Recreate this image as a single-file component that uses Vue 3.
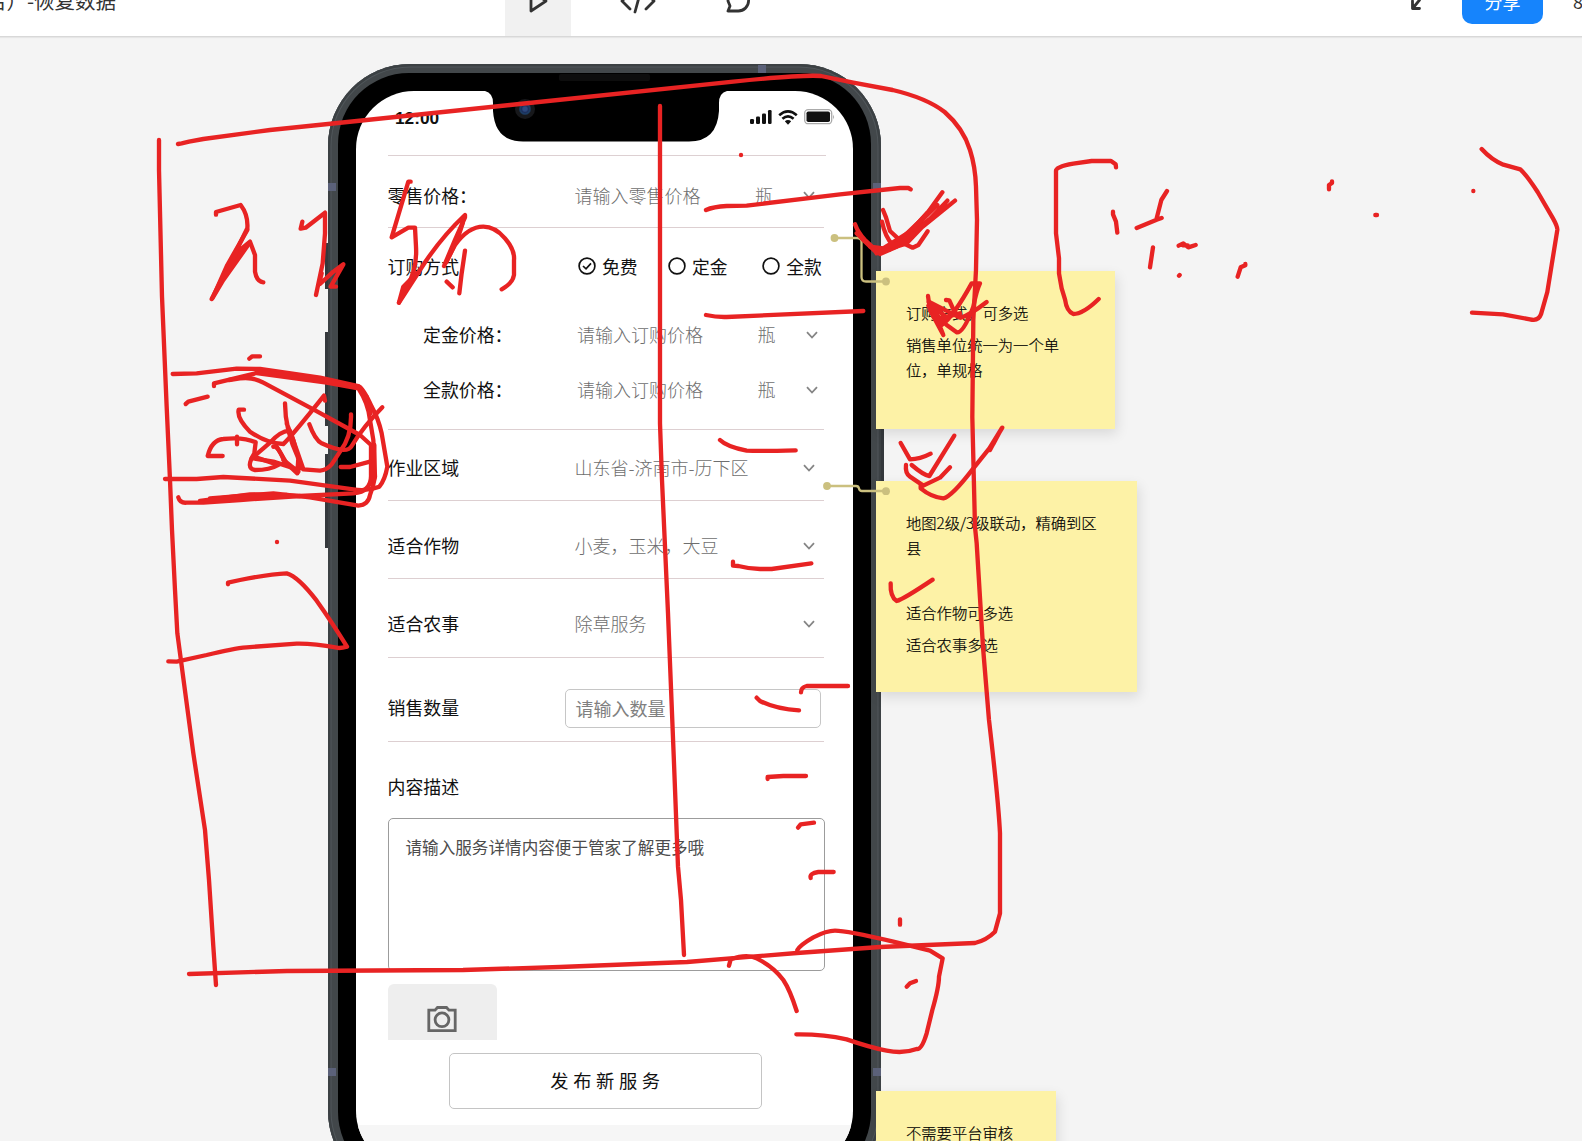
<script setup>
const notes = [
  { cls: 'note-order', lines: ['订购方式，可多选', '销售单位统一为一个单位，单规格'] },
  { cls: 'note-area', lines: ['地图2级/3级联动，精确到区县', '', '适合作物可多选', '适合农事多选'] },
  { cls: 'note-audit', lines: ['不需要平台审核'] },
]

const payOptions = [
  { label: '免费', checked: true },
  { label: '定金', checked: false },
  { label: '全款', checked: false },
]

const selects = [
  { label: '作业区域', value: '山东省-济南市-历下区', cls: 'row-area' },
  { label: '适合作物', value: '小麦，玉米，大豆', cls: 'row-crop' },
  { label: '适合农事', value: '除草服务', cls: 'row-work' },
]

// Hand-drawn annotation strokes, stored per tile at 3x resolution
const ink = [
  {
    x: 140,
    y: 130,
    d: [
      'M57 30V120L66 500L80 830L90 1050L96 1200L105 1380L112 1510L160 1870L195 2100L207 2250L220 2450L228 2565',
      'M228 254V246L302 225Q325 255 322 295L280 380L215 507L265 415L300 360L330 335L345 375V425Q350 455 370 457',
      'M222 495L262 405L322 300M217 505L250 450L328 340M240 460L290 365M250 450L275 390',
      'M487 275L482 296L497 293L555 248V310L548 400L528 495M540 462L580 425L610 403L572 470H588M540 450L545 430',
      'M812 155H805L755 322L805 293H825L828 350Q832 420 800 470L777 518L840 420Q900 325 975 255V262L945 330L912 408L945 345Q985 290 1030 290Q1065 290 1095 325Q1125 360 1122 390V435Q1118 460 1085 478',
      'M777 518L790 470L830 430M780 510L815 450M920 395L955 320L968 280M975 362L965 430L958 490M920 455L938 472',
      'M328 686L337 679H360',
      'M98 732L170 730L290 716L360 717L540 743L655 768Q670 775 695 830Q715 865 725 910L742 1010Q735 1050 718 1070Q680 1085 640 1078L450 1052L250 1041L170 1047H75',
      'M222 768V760L350 729L560 758L655 775Q685 820 690 870L700 930L705 1040Q700 1070 690 1095Q685 1125 655 1127L510 1102L400 1090L210 1105',
      'M350 722L560 752L660 772M680 800L692 850',
      'M267 750L300 745Q340 740 370 758L520 838L660 915L693 945V1035Q695 1085 640 1090L480 1098L330 1093L180 1113',
      'M115 1102Q120 1120 140 1118H190L300 1110L480 1098M200 1112L330 1100L440 1095M703 945V1045M699 950V1050',
      'M137 822L145 815L203 800',
      'M312 839H296Q290 865 330 905Q380 940 430 942Q450 925 552 797L555 812',
      'M435 820Q435 900 475 985L472 1030L440 1000L410 950M440 880L460 930L482 1015',
      'M248 978H203Q215 930 250 927Q310 920 347 937L343 970Q315 1015 345 1020Q390 1020 415 1005L350 983',
      'M335 985L390 938Q425 900 450 903L470 960L490 1018M340 985L400 995L472 1018M400 950Q415 945 435 1000M490 1018L540 1022Q560 1020 575 1003L600 965Q635 920 633 853M430 990L475 1025',
      'M508 883Q525 930 545 940Q620 975 635 948Q670 890 727 832',
      'M602 1011H630L690 995M291 920V943',
    ],
  },
  {
    x: 140,
    y: 480,
    d: [
      'M411 186h.1',
      'M264 313V308L300 300Q390 282 440 280Q475 290 530 362Q575 425 621 500Q600 506 590 503Q520 490 470 491L320 502Q280 505 200 525L110 545L85 544',
    ],
  },
  {
    x: 540,
    y: 130,
    d: ['M603 75h.1', 'M498 240Q520 230 560 228L620 227L900 193L1080 174H1105L1112 178', 'M498 555Q530 562 560 561L970 543', 'M540 930Q560 950 620 962Q660 964 767 961'],
  },
  {
    x: 860,
    y: 130,
    d: [
      'M-15 283Q-5 310 15 330L60 372L110 350Q140 330 180 280L247 187',
      'M-10 310L45 360L120 345L285 212M50 370L130 325L232 225M60 365L140 340L262 212M30 350L70 355L150 305L200 250',
      'M5 325L50 368L90 358M60 362L110 340L165 300M120 330L185 268L225 225M150 320L205 270',
      'M69 240L78 262L90 303L130 340L158 353L175 345L203 304M66 275Q75 320 98 345M80 350Q110 350 160 310',
      'M204 498L210 540L250 615L240 590L205 527L245 585Q280 560 335 460H360Q350 480 340 530Q310 610 290 607L260 585L210 540',
      'M258 510L268 511L283 545L302 563Q330 555 380 516M206 515L300 563M215 540L240 565L300 550M220 560L240 580L280 550M212 525L235 580M225 535L260 562',
      'M122 939L150 988Q180 988 212 971M283 917L208 1038Q190 1035 155 1005',
      'M138 1005Q135 1030 150 1040L190 1067L240 1043L270 1012M182 1065V1075Q215 1102 250 1105Q275 1100 340 1015L388 955L425 895L390 960M400 942L425 895M405 930L427 893',
      'M768 112L767 103L753 93H695L640 101Q588 110 588 122V310L597 385V430L605 475L615 508Q620 545 640 552Q670 552 716 507',
      'M759 245V253L768 275L772 308M921 183L904 210L890 265M830 294L890 269L905 264M879 352L870 412',
      'M956 347L970 340L985 352L1007 345M968 346h15M957 437l2-2M1133 440L1142 412L1156 406V402',
    ],
  },
  {
    x: 540,
    y: 480,
    d: [
      'M579 245V257L595 258Q625 266 660 267H695L814 250',
      'M650 653L660 663Q710 688 777 691M783 637Q783 622 800 618H924',
      'M683 897V891L730 888H798M774 1043L782 1033L822 1028M812 1194Q808 1180 835 1176H881',
      'M1052 310Q1050 350 1070 363Q1090 358 1178 299',
    ],
  },
  {
    x: 560,
    y: 800,
    d: [
      'M1020 358V374M1040 560L1050 550L1068 543',
      'M712 450Q720 435 760 412Q800 392 825 392Q860 392 1000 425L1110 452L1148 475L1137 530Q1137 560 1117 630L1100 700Q1085 750 1070 747Q1030 762 980 752Q930 742 860 718Q790 702 709 703',
      'M507 497L512 478Q560 460 590 475Q640 500 670 540Q690 570 710 633',
    ],
  },
  {
    x: 0,
    y: 0,
    d: [
      'M534 432L545 430L567 425L610 417L810 390L1071 363L1530 315L2200 245Q2400 224 2463 228L2560 248L2678 270Q2780 294 2834 336Q2890 385 2910 450Q2926 500 2928 560L2931 660L2928 810L2920 960L2917 1251L2925 1581L2930 1629L2949 1941L2967 2160Q2995 2400 3000 2499V2740L2985 2795Q2960 2820 2925 2829L2640 2841L2391 2859L2061 2886L1680 2901L1389 2910L861 2913L567 2922',
      'M1980 318V1270L1986 1440L2004 1839L2022 2289L2034 2600L2043 2700L2052 2865',
      'M3987 568V555L3996 549V544M4126 645h5M4420 573h.1',
      'M4445 447Q4475 480 4510 494L4561 508Q4580 525 4613 576L4659 655Q4673 680 4672 690L4655 795L4642 876L4623 943Q4615 965 4590 958L4509 943L4416 938',
    ],
  },
]
</script>

<template>
  <div class="app">
    <header class="topbar">
      <div class="doc-title">名）-恢复数据</div>
      <nav class="modes">
        <span class="mode active">
          <svg width="24" height="26" viewBox="0 0 24 26"><path d="M5 3V23L20 13Z" /></svg>
        </span>
        <span class="mode">
          <svg width="36" height="26" viewBox="0 0 36 26"><path d="M10 5L2 13L10 21M26 5L34 13L26 21M21 2L15 24" /></svg>
        </span>
        <span class="mode">
          <svg width="26" height="26" viewBox="0 0 26 26"><path d="M3 23H13A10.300 10.300 0 1 0 3 13L5 18Z" /></svg>
        </span>
      </nav>
      <div class="actions">
        <svg class="collapse" width="22" height="24" viewBox="0 0 22 24"><path d="M12 11V4M12 11H19M12 11L20 2M2.500 14V21.500H9.500M3 21L9.500 13" /></svg>
        <button class="share">分享</button>
        <span class="zoom">80%</span>
      </div>
    </header>

    <main class="canvas">
      <div class="phone">
        <i class="key k1"></i><i class="key k2"></i><i class="key k3"></i><i class="key k4"></i>
        <i class="band b1"></i><i class="band b2"></i><i class="band b3"></i><i class="band b4"></i><i class="band b5"></i>
        <div class="bezel">
          <div class="screen">
            <div class="status">
              <span class="time">12:00</span>
              <span class="signals">
                <svg width="22" height="14" viewBox="0 0 22 14" fill="#111"><rect y="9" width="4" height="5" rx="1.200" /><rect x="6" y="6.500" width="4" height="7.500" rx="1.200" /><rect x="12" y="3.500" width="4" height="10.500" rx="1.200" /><rect x="18" width="3.600" height="14" rx="1.200" /></svg>
                <svg width="20" height="15" viewBox="0 0 20 15"><g fill="none" stroke="#111" stroke-width="2.600"><path d="M1.200 5.300Q10-2.400 18.800 5.300" /><path d="M4.400 8.800Q10 4 15.600 8.800" /></g><path d="M6.800 11.300Q10 8.600 13.200 11.300L10 14.700Z" fill="#111" /></svg>
                <svg width="31" height="16" viewBox="0 0 31 16"><rect x=".7" y=".7" width="27" height="14" rx="3.500" fill="#fff" stroke="#aaa" stroke-width="1.300" /><rect x="2.500" y="2.500" width="23.500" height="10.500" rx="1.800" fill="#111" /><path d="M29.200 5.500Q31 8 29.200 10.500Z" fill="#999" /></svg>
              </span>
            </div>

            <div class="form">
              <div class="row row-retail">
                <label>零售价格：</label>
                <span class="value">请输入零售价格</span>
                <span class="unit">瓶</span>
                <svg class="chev" viewBox="0 0 12 8"><path d="M1 1.200L6 6.500L11 1.200" /></svg>
              </div>

              <div class="group">
                <div class="line line-mode">
                  <label>订购方式</label>
                  <span v-for="o in payOptions" :key="o.label" class="radio">
                    <svg width="18" height="18" viewBox="0 0 18 18"><circle cx="9" cy="9" r="7.900" /><path v-if="o.checked" d="M5 9L8 11.800L13 6.400" /></svg>
                    {{ o.label }}
                  </span>
                </div>
                <div class="line line-deposit">
                  <label>定金价格：</label>
                  <span class="value">请输入订购价格</span>
                  <span class="unit">瓶</span>
                  <svg class="chev" viewBox="0 0 12 8"><path d="M1 1.200L6 6.500L11 1.200" /></svg>
                </div>
                <div class="line line-full">
                  <label>全款价格：</label>
                  <span class="value">请输入订购价格</span>
                  <span class="unit">瓶</span>
                  <svg class="chev" viewBox="0 0 12 8"><path d="M1 1.200L6 6.500L11 1.200" /></svg>
                </div>
              </div>

              <div v-for="s in selects" :key="s.label" class="row" :class="s.cls">
                <label>{{ s.label }}</label>
                <span class="value wide">{{ s.value }}</span>
                <svg class="chev" viewBox="0 0 12 8"><path d="M1 1.200L6 6.500L11 1.200" /></svg>
              </div>

              <div class="row row-count">
                <label>销售数量</label>
                <span class="field">请输入数量</span>
              </div>

              <div class="desc-label">内容描述</div>
              <div class="desc">请输入服务详情内容便于管家了解更多哦</div>

              <div class="upload">
                <svg width="30" height="27" viewBox="0 0 30 27"><path d="M1.800 4.200H8L10.500 1.500H19.500L22 4.200H28.200V24.700H1.800Z" /><circle cx="15" cy="13.800" r="6.900" /></svg>
              </div>
            </div>

            <div class="publish">发布新服务</div>
            <div class="home"></div>
          </div>

          <svg class="notch" width="242" height="51" viewBox="0 0 242 51"><path d="M0 0Q8 2 8 12V20Q10 50.500 38 50.500H204Q232 50.500 234 20V12Q234 2 242 0Z" /></svg>
          <i class="speaker"></i>
          <i class="lens"></i>
        </div>
      </div>

      <aside v-for="n in notes" :key="n.cls" class="note" :class="n.cls">
        <p v-for="(t, i) in n.lines" :key="i">{{ t }}</p>
      </aside>

      <svg class="overlay" width="1582" height="1141" viewBox="0 0 1582 1141">
        <g class="links">
          <path d="M834 238H857Q861.500 238 861.500 242V277Q861.500 281.500 866 281.500H885" />
          <path d="M827 486H856Q858.500 486 859 488.500T862 491H885" />
          <circle cx="834.500" cy="238" r="3.900" /><circle cx="886" cy="281.500" r="3.900" />
          <circle cx="827" cy="486" r="3.900" /><circle cx="886" cy="491.200" r="3.900" />
        </g>
        <g v-for="(tile, i) in ink" :key="i" class="ink" :transform="`translate(${tile.x} ${tile.y}) scale(0.33333)`">
          <path v-for="(d, j) in tile.d" :key="j" :d="d" />
        </g>
      </svg>
    </main>
  </div>
</template>

<style>
body {
  margin: 0;
  background: #f4f4f4;
}
</style>

<style scoped>
.app {
  position: relative;
  width: 1582px;
  height: 1141px;
  overflow: hidden;
  background: #f4f4f4;
  font-family: "Noto Sans CJK SC", sans-serif;
  color: #111;
}
.topbar {
  display: flex;
  box-sizing: border-box;
  height: 72px;
  margin-top: -35px;
  background: #fff;
  border-bottom: 1px solid #d8d8d8;
  box-shadow: 0 1px 1px #e6e6e6;
}
.doc-title {
  width: 505px;
  margin-left: -14px;
  font-size: 20.500px;
  line-height: 71px;
  color: #333;
  white-space: nowrap;
  flex: none;
}
.modes {
  display: flex;
  flex: 1;
  gap: 34px;
  margin-left: 14px;
}
.mode {
  display: flex;
  align-items: center;
  justify-content: center;
  width: 66px;
}
.mode.active {
  background: #f1f1f1;
}
.mode svg,
.collapse {
  fill: none;
  stroke: #333;
  stroke-width: 2.800;
  stroke-linejoin: round;
  stroke-linecap: round;
}
.actions {
  display: flex;
  align-items: center;
  width: 172px;
  flex: none;
}
.collapse {
  margin: -4px 30px 0 0;
  flex: none;
}
.share {
  width: 81px;
  height: 47px;
  padding: 0;
  border: 0;
  border-radius: 10px;
  background: #1684fc;
  color: #fff;
  font: 18px "Noto Sans CJK SC", sans-serif;
  flex: none;
}
.zoom {
  margin-left: 30px;
  font-size: 18px;
  color: #333;
}
.phone {
  position: absolute;
  left: 328px;
  top: 63.500px;
  width: 553px;
  height: 1129.500px;
  box-sizing: border-box;
  padding: 9.500px 10px;
  border-radius: 82px;
  background: #42474a;
  box-shadow: inset 0 0 0 2.500px #3c4144, inset 0 0 0 3.500px #50565a;
}
.bezel {
  position: relative;
  box-sizing: border-box;
  height: 1110px;
  padding: 18px 18px 14px;
  border-radius: 71px;
  background: #000;
}
.screen {
  display: flex;
  flex-direction: column;
  height: 1078px;
  border-radius: 58px;
  background: #fff;
  overflow: hidden;
}
.key {
  position: absolute;
  left: -3px;
  width: 3px;
  background: #34383c;
}
.k1 { top: 179px; height: 46px; }
.k2 { top: 268px; height: 94px; }
.k3 { top: 390px; height: 94px; }
.k4 { left: 553px; top: 340px; height: 155px; }
.band {
  position: absolute;
  width: 8px;
  height: 8px;
  background: #5b6179;
}
.b1 { left: 0; top: 119px; }
.b2 { right: 0; top: 119px; }
.b3 { left: 0; top: 1004px; }
.b4 { right: 0; top: 1004px; }
.b5 { left: 430px; top: 1px; }
.notch {
  position: absolute;
  left: 147px;
  top: 17.500px;
}
.speaker {
  position: absolute;
  left: 221px;
  top: 1px;
  width: 91px;
  height: 7px;
  border-radius: 2px;
  background: #0d0d0d;
}
.lens {
  position: absolute;
  left: 177px;
  top: 26px;
  width: 20px;
  height: 20px;
  border-radius: 50%;
  background: radial-gradient(circle, #2d4a80 0 2px, #1c2f5c 3.500px, #1d4068 5px, #17181b 6.500px);
}
.status {
  display: flex;
  justify-content: space-between;
  align-items: flex-start;
  box-sizing: border-box;
  height: 64px;
  padding: 17px 18px 0 39px;
  flex: none;
}
.time {
  font: bold 17.300px/20px "Liberation Sans", sans-serif;
}
.signals {
  display: flex;
  align-items: center;
  gap: 6px;
  height: 18px;
}
.form {
  width: 438px;
  height: 885px;
  margin-left: 31.500px;
  border-top: 1px solid #ddd0d2;
  box-sizing: border-box;
  font-size: 18px;
  flex: none;
  overflow: hidden;
}
.row,
.line {
  display: flex;
  align-items: center;
  box-sizing: border-box;
  white-space: nowrap;
}
.row,
.group {
  box-sizing: border-box;
  width: 436.500px;
  border-bottom: 1px solid #ddcfd1;
}
label {
  width: 187px;
  font-size: 17.900px;
  flex: none;
}
.value {
  width: 180.500px;
  color: #6e6e6e;
  font-weight: 300;
}
.value.wide { width: 228.500px; }
.unit {
  width: 48px;
  color: #6e6e6e;
  font-weight: 300;
}
.chev {
  position: relative;
  top: 1px;
  width: 12px;
  height: 8px;
  fill: none;
  stroke: #858585;
  stroke-width: 1.800;
}
.row-retail { height: 72px; padding-top: 7px; }
.row-retail .chev { top: 0; }
.group { height: 202px; }
.line-mode { height: 76px; }
.line-deposit,
.line-full { padding-left: 35.500px; }
.line-deposit label,
.line-full label { width: 154px; }
.line-deposit { height: 60px; }
.line-full { height: 50px; }
.line-mode label { width: 190px; }
.radio {
  display: flex;
  align-items: center;
  gap: 6.500px;
  margin-right: 30px;
  font-size: 17.800px;
}
.radio + .radio { margin-right: 34px; }
.radio svg {
  fill: none;
  stroke: #111;
  stroke-width: 1.700;
}
.row-area { height: 71px; padding-top: 4px; }
.row-crop { height: 78px; padding-top: 11px; }
.row-work { height: 79px; padding-top: 10px; }
.row-count { height: 84px; padding-top: 15px; }
.row-count label { width: 177px; }
.field {
  position: relative;
  top: 1.500px;
  box-sizing: border-box;
  width: 256px;
  height: 39px;
  padding-left: 10px;
  border: 1px solid #c6c6c6;
  border-radius: 5px;
  line-height: 36px;
  color: #808080;
}
.desc-label {
  box-sizing: border-box;
  height: 76px;
  padding-top: 13px;
  font-size: 17.900px;
  line-height: 62px;
}
.desc {
  box-sizing: border-box;
  width: 437.500px;
  height: 153px;
  padding: 15.500px 17px;
  border: 1px solid #9c9c9c;
  border-radius: 5px;
  font-size: 16.600px;
  line-height: 25px;
  color: #4c4c4c;
}
.upload {
  display: flex;
  justify-content: center;
  box-sizing: border-box;
  width: 109px;
  height: 80px;
  margin-top: 13px;
  padding-top: 22px;
  border-radius: 6px;
  background: #eee;
}
.upload svg {
  fill: none;
  stroke: #666;
  stroke-width: 2.800;
}
.publish {
  box-sizing: border-box;
  width: 313px;
  height: 56px;
  margin: 13px 0 0 93px;
  padding-left: 4px;
  border: 1px solid #c4c4c4;
  border-radius: 5px;
  text-align: center;
  font-size: 18.300px;
  line-height: 52px;
  letter-spacing: 4.600px;
  flex: none;
}
.home {
  flex: 1;
  margin-top: 16px;
  background: #f6f6f6;
}
.note {
  position: absolute;
  left: 876px;
  box-sizing: border-box;
  padding: 28.500px 30px 0 30px;
  background: #fdf2a6;
  box-shadow: 2px 5px 12px rgba(0, 0, 0, 0.11);
  font-size: 15.300px;
  font-weight: 300;
  line-height: 25.200px;
  color: #000;
  -webkit-text-stroke: 0.200px #000;
}
.note p {
  min-height: 25.200px;
  margin: 0 0 7.300px;
}
.note-order { top: 271px; width: 239px; height: 158px; }
.note-area { top: 481px; width: 261px; height: 211px; }
.note-audit { top: 1091px; width: 180px; height: 120px; }
.overlay {
  position: absolute;
  left: 0;
  top: 0;
}
.links path {
  fill: none;
  stroke: #cbc07f;
  stroke-width: 2.300;
}
.links circle { fill: #cbc07f; }
.ink {
  fill: none;
  stroke: #e82323;
  stroke-width: 13;
  stroke-linecap: round;
  stroke-linejoin: round;
}
</style>
